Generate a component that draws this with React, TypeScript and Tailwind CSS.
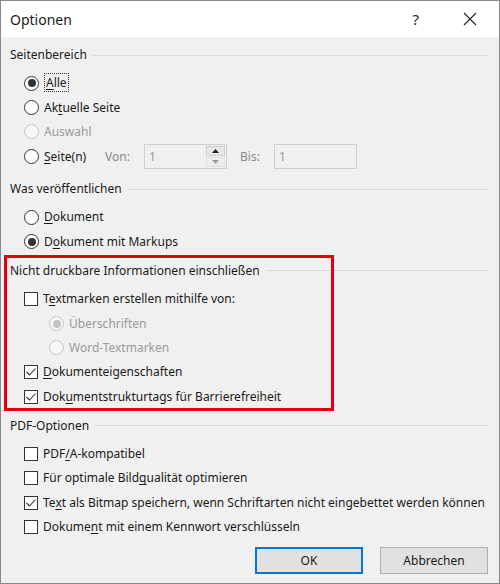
import React from "react";

const font = { fontFamily: '"Segoe UI", "Noto Sans", "Open Sans", sans-serif' };

function Radio({ checked = false, disabled = false }: { checked?: boolean; disabled?: boolean }) {
  return (
    <span
      className={`flex h-[15px] w-[15px] shrink-0 items-center justify-center rounded-full border ${
        disabled ? "border-[#c4c4c4] bg-[#f7f7f7]" : "border-[#333] bg-white"
      }`}
    >
      {checked && (
        <span className={`h-[8px] w-[8px] rounded-full ${disabled ? "bg-[#c4c4c4]" : "bg-[#333]"}`} />
      )}
    </span>
  );
}

function Check({ checked = false }: { checked?: boolean }) {
  return (
    <span className="flex h-[14px] w-[14px] shrink-0 items-center justify-center border border-[#333] bg-white">
      {checked && (
        <svg width="12" height="12" viewBox="0 0 12 12">
          <polyline points="1.5,6 4.5,9 10.5,2.5" fill="none" stroke="#333" strokeWidth="1.1" />
        </svg>
      )}
    </span>
  );
}

function Header({ children }: { children: React.ReactNode }) {
  return (
    <div className="flex h-[20px] items-center pr-[10px]">
      <span className="whitespace-nowrap text-[12px] text-[#1a1a1a]">{children}</span>
      <span className="ml-[6px] h-px flex-1 bg-[#dadada]" />
    </div>
  );
}

function Row({
  indent = 14,
  control,
  children,
  disabled = false,
}: {
  indent?: number;
  control: React.ReactNode;
  children: React.ReactNode;
  disabled?: boolean;
}) {
  return (
    <div className="flex h-[24.4px] items-center" style={{ paddingLeft: indent }}>
      {control}
      <span
        className={`ml-[5px] whitespace-nowrap text-[12px] ${disabled ? "text-[#9a9a9a]" : "text-[#1a1a1a]"}`}
      >
        {children}
      </span>
    </div>
  );
}

function Spin({ withArrows = true }: { withArrows?: boolean }) {
  return (
    <div className="flex h-[25px] w-[83px] items-center border border-[#cfcfcf] bg-[#f0f0f0]">
      <span className="flex-1 pl-[4px] text-[12px] text-[#9a9a9a]">1</span>
      {withArrows && (
        <div className="mr-[1px] flex h-[21px] w-[19px] flex-col gap-px">
          <span className="flex flex-1 items-center justify-center border border-[#cfcfcf] bg-[#e6e6e6]">
            <svg width="7" height="4" viewBox="0 0 7 4">
              <polygon points="0,4 3.5,0 7,4" fill="#222" />
            </svg>
          </span>
          <span className="flex flex-1 items-center justify-center border border-[#e0e0e0] bg-[#ececec]">
            <svg width="7" height="4" viewBox="0 0 7 4">
              <polygon points="0,0 3.5,4 7,0" fill="#9a9a9a" />
            </svg>
          </span>
        </div>
      )}
    </div>
  );
}

export default function App() {
  return (
    <div className="h-[584px] w-[500px] border border-[#8a8a8a] bg-[#f0f0f0]" style={font}>
      {/* Titelleiste */}
      <div className="flex h-[36px] items-center bg-white pl-[9px]">
        <span className="flex-1 text-[14px] text-[#1a1a1a]">Optionen</span>
        <span className="mr-[44px] text-[15px] text-[#222]">?</span>
        <svg width="14" height="14" viewBox="0 0 14 14" className="mr-[22px]">
          <path d="M1 1 L13 13 M13 1 L1 13" stroke="#222" strokeWidth="1.1" />
        </svg>
      </div>

      <div className="pl-[9px] pt-[8px]">
        <Header>Seitenbereich</Header>
        <div className="mt-[6px]">
          <Row control={<Radio checked />}>
            <span className="border border-dotted border-[#333] px-px">
              <u className="underline-offset-2">A</u>lle
            </span>
          </Row>
          <Row control={<Radio />}>
            Ak<u className="underline-offset-2">t</u>uelle Seite
          </Row>
          <Row control={<Radio disabled />} disabled>
            Auswahl
          </Row>
          <div className="flex h-[25px] items-center pl-[14px]">
            <Radio />
            <span className="ml-[5px] w-[61px] text-[12px] text-[#1a1a1a]">
              <u className="underline-offset-2">S</u>eite(n)
            </span>
            <span className="w-[39px] text-[12px] text-[#8a8a8a]">Von:</span>
            <Spin />
            <span className="ml-[13px] w-[34px] text-[12px] text-[#8a8a8a]">Bis:</span>
            <Spin withArrows={false} />
          </div>
        </div>

        <div className="mt-[10px]">
          <Header>Was veröffentlichen</Header>
        </div>
        <div className="mt-[6px]">
          <Row control={<Radio />}>
            <u className="underline-offset-2">D</u>okument
          </Row>
          <Row control={<Radio checked />}>
            D<u className="underline-offset-2">o</u>kument mit Markups
          </Row>
        </div>

        {/* Markierter Abschnitt */}
        <div className="relative mt-[7px]">
          <div className="pointer-events-none absolute left-[-6px] top-[-6px] h-[156px] w-[330px] border-[3px] border-[#e3000f]" />
          <Header>Nicht druckbare Informationen einschließen</Header>
          <div className="mt-[6px]">
            <Row control={<Check />}>
              T<u className="underline-offset-2">e</u>xtmarken erstellen mithilfe von:
            </Row>
            <Row indent={39} control={<Radio checked disabled />} disabled>
              Überschriften
            </Row>
            <Row indent={39} control={<Radio disabled />} disabled>
              Word-Textmarken
            </Row>
            <Row control={<Check checked />}>
              <u className="underline-offset-2">D</u>okumenteigenschaften
            </Row>
            <Row control={<Check checked />}>
              Dok<u className="underline-offset-2">u</u>mentstrukturtags für Barrierefreiheit
            </Row>
          </div>
        </div>

        <div className="mt-[7px]">
          <Header>PDF-Optionen</Header>
        </div>
        <div className="mt-[6px]">
          <Row control={<Check />}>
            PDF<u className="underline-offset-2">/</u>A-kompatibel
          </Row>
          <Row control={<Check />}>
            Für optimale Bild<u className="underline-offset-2">q</u>ualität optimieren
          </Row>
          <Row control={<Check checked />}>
            Te<u className="underline-offset-2">x</u>t als Bitmap speichern, wenn Schriftarten nicht eingebettet werden können
          </Row>
          <Row control={<Check />}>
            Dokume<u className="underline-offset-2">n</u>t mit einem Kennwort verschlüsseln
          </Row>
        </div>

        <div className="mt-[8px] flex justify-end gap-[17px] pr-[11px]">
          <button className="h-[27px] w-[108px] border-2 border-[#0078d7] bg-[#e1e1e1] text-[12px] text-[#1a1a1a]">
            OK
          </button>
          <button className="h-[27px] w-[108px] border border-[#adadad] bg-[#e1e1e1] text-[12px] text-[#1a1a1a]">
            Abbrechen
          </button>
        </div>
      </div>
    </div>
  );
}
